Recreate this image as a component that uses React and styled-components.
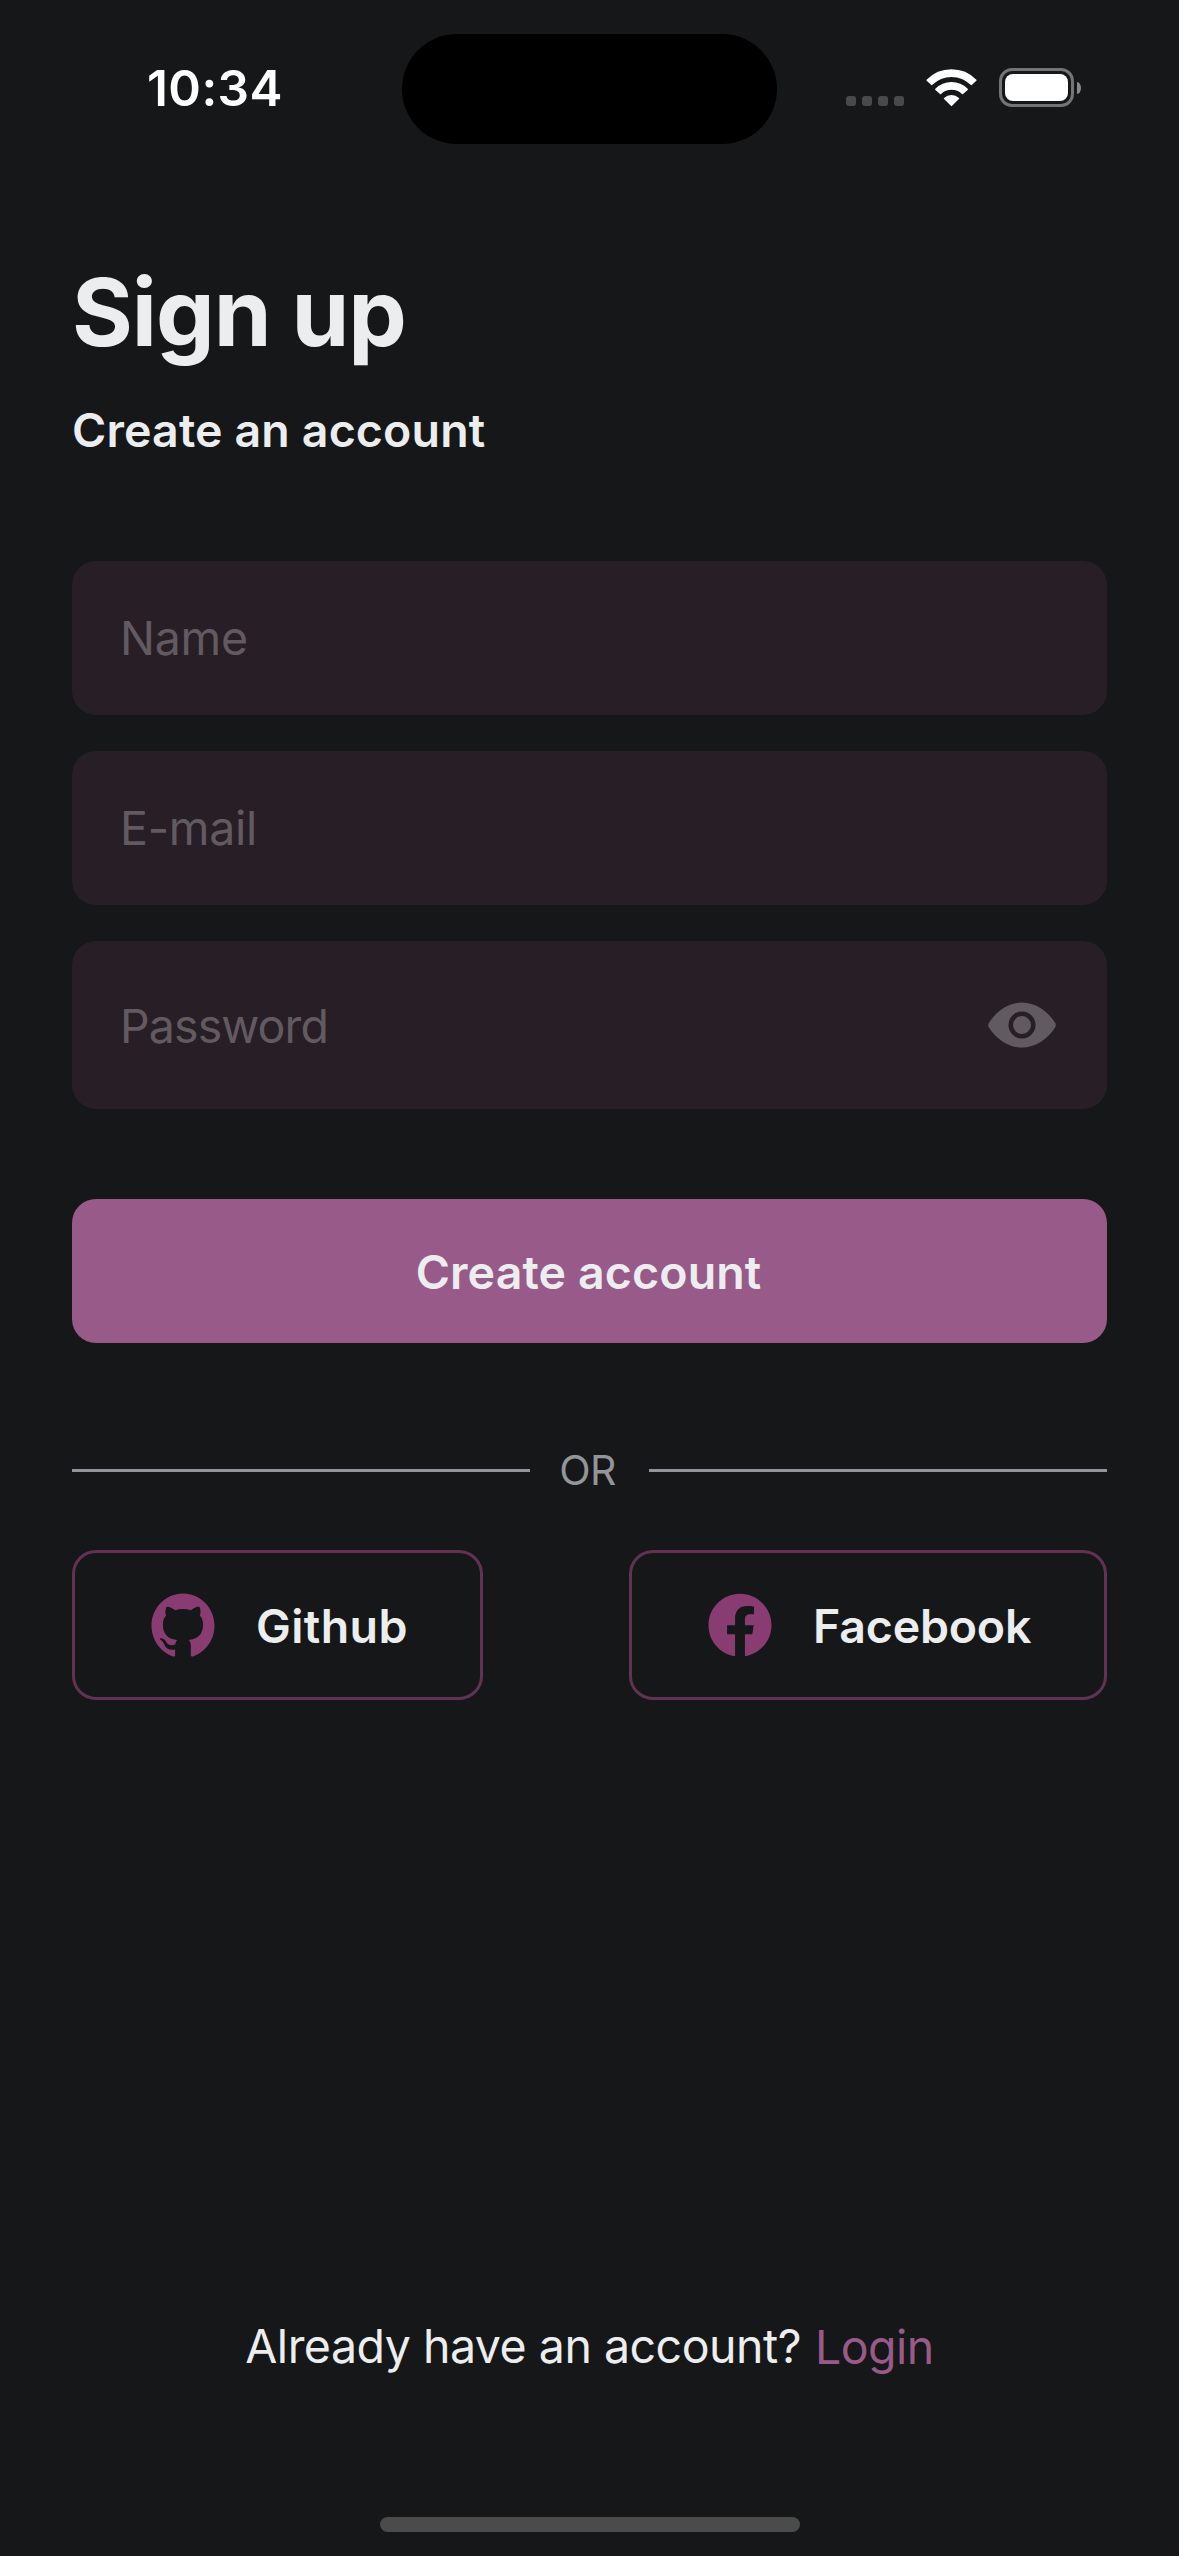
import React, { useState } from 'react';
import styled, { createGlobalStyle } from 'styled-components';
import { IoEye, IoLogoFacebook, IoLogoGithub } from 'react-icons/io5';

const color = {
  background: '#151718',
  text: '#ecedee',
  field: '#281e25',
  placeholder: '#625a61',
  primary: '#985a89',
  accent: '#883c72',
  outline: '#633253',
  divider: '#929599',
};

const GlobalStyle = createGlobalStyle`
  * {
    box-sizing: border-box;
  }

  body {
    margin: 0;
    background: ${color.background};
    font-family: Inter, 'Liberation Sans', sans-serif;
  }

  button,
  input {
    margin: 0;
    border: 0;
    font-family: inherit;
  }
`;

const Screen = styled.div`
  display: flex;
  flex-direction: column;
  width: 1179px;
  height: 2556px;
  padding-bottom: 24px;
  overflow: hidden;
  background: ${color.background};
  color: ${color.text};
`;

const StatusBar = styled.header`
  display: grid;
  grid-template-columns: 402px 375px 1fr;
  height: 144px;
  padding-top: 34px;
`;

const Clock = styled.time`
  align-self: center;
  padding: 0 0 2px 147px;
  color: #fff;
  font-size: 49.5px;
  font-weight: 600;
  line-height: 60px;
  letter-spacing: 0.4px;
`;

const Island = styled.div`
  border-radius: 55px;
  background: #000;
`;

const Indicators = styled.div`
  display: flex;
  align-items: flex-end;
  gap: 22px;
  padding: 0 0 37px 69px;
`;

const Signal = styled.div`
  display: flex;
  gap: 6px;
  margin-bottom: 1px;
`;

const SignalDot = styled.span`
  width: 10px;
  height: 10px;
  border-radius: 3px;
  background: #48494b;
`;

const WifiIcon = styled.svg`
  width: 51px;
  height: 38px;
`;

const Battery = styled.div`
  display: flex;
  align-items: center;
  gap: 3px;
`;

const BatteryBody = styled.div`
  display: flex;
  width: 75px;
  height: 39px;
  padding: 3px;
  border: 3px solid #737475;
  border-radius: 13px;
`;

const BatteryLevel = styled.div`
  flex: 1;
  border-radius: 8px;
  background: #fff;
`;

const BatteryCap = styled.div`
  width: 4px;
  height: 12px;
  border-radius: 0 4px 4px 0 / 0 6px 6px 0;
  background: #88898a;
`;

const Content = styled.main`
  display: flex;
  flex-direction: column;
  padding: 112px 72px 0;
`;

const Title = styled.h1`
  margin: 0;
  font-size: 93px;
  font-weight: 700;
  line-height: 112px;
  letter-spacing: -1.06px;
`;

const Subtitle = styled.p`
  margin: 34px 0 0;
  font-size: 46.5px;
  font-weight: 600;
  line-height: 56px;
  letter-spacing: 0.14px;
`;

const Form = styled.form`
  display: flex;
  flex-direction: column;
  gap: 36px;
  margin-top: 103px;
`;

const Field = styled.label`
  display: flex;
  align-items: center;
  height: ${(p) => p.$height}px;
  padding: 0 49px 0 48px;
  border-radius: 24px;
  background: ${color.field};
`;

const Input = styled.input`
  flex: 1;
  min-width: 0;
  height: 58px;
  padding: ${(p) => p.$shift || 0}px 0 0;
  outline: none;
  background: transparent;
  color: ${color.text};
  font-size: 46.5px;
  letter-spacing: ${(p) => p.$tracking}px;

  &::placeholder {
    color: ${color.placeholder};
    opacity: 1;
  }
`;

const RevealButton = styled.button`
  display: flex;
  padding: 0;
  background: none;
  color: ${color.placeholder};
  font-size: 72px;
`;

const SubmitButton = styled.button`
  height: 144px;
  margin-top: 54px;
  padding: 1px 2px 0 0;
  border-radius: 24px;
  background: ${color.primary};
  color: ${color.text};
  font-size: 46.5px;
  font-weight: 600;
  line-height: 56px;
  letter-spacing: 0.12px;
`;

const Divider = styled.div`
  display: grid;
  grid-template-columns: 1fr 119px 1fr;
  align-items: center;
  height: 51px;
  margin-top: 102px;
`;

const Rule = styled.span`
  height: 3px;
  background: ${color.divider};
`;

const DividerLabel = styled.span`
  padding: 0 4px 1px 0;
  color: ${color.divider};
  font-size: 41px;
  line-height: 50px;
  letter-spacing: -0.7px;
  text-align: center;
`;

const Providers = styled.div`
  display: flex;
  justify-content: space-between;
  margin-top: 54px;
`;

const ProviderButton = styled.button`
  display: flex;
  align-items: center;
  gap: 36px;
  width: ${(p) => p.$width}px;
  height: 150px;
  padding: 0 0 0 72px;
  border: 3px solid ${color.outline};
  border-radius: 24px;
  background: transparent;
  color: ${color.accent};
  font-size: 72px;
`;

const ProviderName = styled.span`
  padding: 1px 0 0 1px;
  color: ${color.text};
  font-size: 46.5px;
  font-weight: 600;
  line-height: 56px;
  letter-spacing: ${(p) => p.$tracking}px;
`;

const Footer = styled.footer`
  display: flex;
  justify-content: center;
  gap: 14px;
  margin-top: auto;
  font-size: 46.5px;
  line-height: 56px;
`;

const Prompt = styled.span`
  letter-spacing: -0.5px;
`;

const LoginLink = styled.a`
  padding-top: 1px;
  color: ${color.primary};
  letter-spacing: -0.55px;
`;

const HomeIndicator = styled.div`
  align-self: center;
  width: 420px;
  height: 15px;
  margin-top: 142px;
  border-radius: 8px;
  background: #4b4b4b;
`;

function Wifi() {
  return (
    <WifiIcon viewBox="0 0 51 38" fill="#fff" stroke="#fff" strokeWidth="1.6" strokeLinejoin="round">
      <path d="M1.2 11.2A34 34 0 0 1 49.8 11.2L45.2 15.3A28 28 0 0 0 5.8 15.3Z" />
      <path d="M9.9 20.3A22 22 0 0 1 41.1 20.3L36.5 24.3A16 16 0 0 0 14.5 24.3Z" />
      <path d="M18.6 29.5A10.5 10.5 0 0 1 32.4 29.5L25.5 36.3Z" />
    </WifiIcon>
  );
}

export default function App() {
  const [revealed, setRevealed] = useState(false);

  return (
    <>
      <GlobalStyle />
      <Screen>
        <StatusBar>
          <Clock>10:34</Clock>
          <Island />
          <Indicators>
            <Signal>
              <SignalDot />
              <SignalDot />
              <SignalDot />
              <SignalDot />
            </Signal>
            <Wifi />
            <Battery>
              <BatteryBody>
                <BatteryLevel />
              </BatteryBody>
              <BatteryCap />
            </Battery>
          </Indicators>
        </StatusBar>

        <Content>
          <Title>Sign up</Title>
          <Subtitle>Create an account</Subtitle>

          <Form onSubmit={(e) => e.preventDefault()}>
            <Field $height={154}>
              <Input placeholder="Name" $tracking={-0.3} />
            </Field>
            <Field $height={154}>
              <Input type="email" placeholder="E-mail" $tracking={-0.3} />
            </Field>
            <Field $height={168}>
              <Input
                type={revealed ? 'text' : 'password'}
                placeholder="Password"
                $tracking={-0.9}
                $shift={2}
              />
              <RevealButton type="button" onClick={() => setRevealed(!revealed)}>
                <IoEye />
              </RevealButton>
            </Field>
            <SubmitButton type="submit">Create account</SubmitButton>
          </Form>

          <Divider>
            <Rule />
            <DividerLabel>OR</DividerLabel>
            <Rule />
          </Divider>

          <Providers>
            <ProviderButton $width={411}>
              <IoLogoGithub />
              <ProviderName $tracking={0.39}>Github</ProviderName>
            </ProviderButton>
            <ProviderButton $width={478}>
              <IoLogoFacebook />
              <ProviderName $tracking={-0.2}>Facebook</ProviderName>
            </ProviderButton>
          </Providers>
        </Content>

        <Footer>
          <Prompt>Already have an account?</Prompt>
          <LoginLink>Login</LoginLink>
        </Footer>
        <HomeIndicator />
      </Screen>
    </>
  );
}
